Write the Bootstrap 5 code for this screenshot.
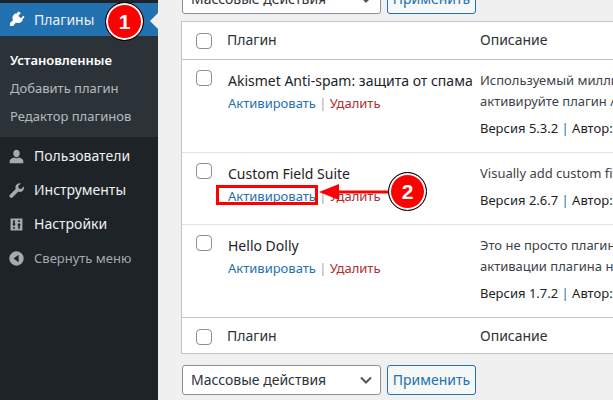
<!DOCTYPE html>
<html lang="ru">
<head>
    <meta charset="UTF-8">
    <meta name="viewport" content="width=device-width, initial-scale=1.0">
    <title>Плагины</title>
    <link href="https://cdn.jsdelivr.net/npm/bootstrap@5.3.1/dist/css/bootstrap.min.css" rel="stylesheet">
    <script src="https://cdn.jsdelivr.net/npm/bootstrap@5.3.1/dist/js/bootstrap.bundle.min.js"></script>
    <style>
        html, body { height: 400px; overflow: hidden; }
        body { background: #f0f0f1; color: #3c434a; font-family: "Noto Sans", sans-serif; font-size: 13px; line-height: 20px; position: relative; }
        a { text-decoration: none; }

        .wp-side { width: 158px; height: 400px; background: #1d2327; padding-top: 3px; flex: none; }
        .side-item { height: 34px; color: #f0f0f1; font-size: 14px; padding-left: 8px; gap: 9px; }
        .side-item svg { width: 17px; height: 17px; fill: #a7aaad; flex: none; }
        .side-item.active { background: #2271b1; color: #f0f0f1; height: 33px; position: relative; }
        .side-item.active svg { fill: #fff; }
        .side-item.active::after { content: ""; position: absolute; right: 0; top: 10px; border: 8px solid transparent; border-right-color: #f0f0f1; }
        .side-sub { background: #2c3338; padding: 10px 0 7px; margin-bottom: 1px; }
        .side-sub a { display: block; height: 28px; line-height: 28px; padding-left: 10px; color: rgba(240,246,252,.7); font-size: 13px; }
        .side-sub a.current { color: #fff; font-weight: 600; }
        .side-gap { height: 1px; }
        .side-item.muted { color: #a7aaad; font-size: 13px; }

        .wp-main { width: 455px; padding: 0 0 0 23px; margin-top: -16px; flex: none; }
        .bulk-row { gap: 6px; padding-left: 1px; }
        .bulk-select { width: 199px; height: 30px; border: 1px solid #8c8f94; border-radius: 3px; background: #fff; padding-left: 8px; font-size: 14px; color: #2c3338; flex: none; }
        .bulk-select svg { width: 12px; height: 8px; margin-right: 8px; }
        .bulk-btn { width: 89px; height: 30px; border: 1px solid #2271b1; border-radius: 3px; background: #f6f7f7; color: #2271b1; font-size: 14px; padding: 0; line-height: 28px; flex: none; }

        .plugin-box { width: 600px; border: 1px solid #c3c4c7; background: #fff; margin: 7px 0 11px; }
        .plugin-box table { table-layout: fixed; width: 600px; margin: 0; border-collapse: collapse; }
        .plugin-box td, .plugin-box th { padding: 0; vertical-align: top; font-weight: 400; white-space: nowrap; overflow: hidden; border: 0; }
        .col-check { width: 45px; }
        .col-name { width: 253px; }
        .head-row td { height: 37px; font-size: 14px; line-height: 36px; color: #2c3338; }
        .head-row.top td { border-bottom: 1px solid #c3c4c7; }
        .foot-row td { border-top: 1px solid #c3c4c7; height: 35px; line-height: 35px; font-size: 14px; color: #2c3338; }
        .plug-row td { border-top: 1px solid #e1e2e4; }
        .plug-row:first-of-type td { border-top: 0; }
        .fake-check { display: block; width: 16px; height: 16px; border: 1px solid #8c8f94; border-radius: 4px; background: #fff; margin: 10px 0 0 14px; }
        .head-row .fake-check, .foot-row .fake-check { margin-top: 11px; }
        .plug-name { font-size: 14px; color: #1d2327; padding-top: 10px; line-height: 21px; padding-left: 1px; }
        .plug-links { font-size: 13px; color: #a7aaad; margin-top: 2px; line-height: 20px; padding-left: 1px; }
        .link-blue { color: #2271b1; }
        .link-red { color: #b32d2e; }
        .plug-desc { padding-top: 10px; font-size: 13px; line-height: 21px; color: #3c434a; }
        .plug-ver { color: #1d2327; margin-top: 6px; font-size: 13px; line-height: 21px; }

        .step-dot { position: absolute; width: 39px; height: 39px; border-radius: 50%; background: #f00; color: #fff; font-family: "Liberation Sans", sans-serif; font-weight: 700; font-size: 21px; border: 1px solid #000; box-shadow: inset 0 0 0 2px #fff; }
        .step-one { left: 105px; top: 2px; }
        .step-two { left: 388px; top: 172px; }
        .red-frame { position: absolute; left: 216px; top: 185px; width: 102px; height: 20px; border: 3px solid #f00; }
        .red-arrow { position: absolute; left: 317px; top: 183px; width: 74px; height: 18px; }
    </style>
</head>
<body>
<div class="d-flex">
    <aside class="wp-side">
        <div class="side-item active d-flex align-items-center">
            <svg viewBox="0 0 20 20"><path d="M13.1 1.2l1.7 1.6-3 3 3.1 3.1 3-3 1.6 1.7-3 3 .9.9-1.8 1.8c-2 2-4.700 2.200-6.800.8L5.200 18.500 1.500 18.500 1.500 14.800 5.300 11.300C3.900 9.200 4.100 6.500 6.100 4.500l1.800-1.800.9.900 3-3z" transform="translate(1 0) scale(.95)"/></svg>
            <span>Плагины</span>
        </div>
        <div class="side-sub">
            <a href="#" class="current">Установленные</a>
            <a href="#">Добавить плагин</a>
            <a href="#">Редактор плагинов</a>
        </div>
        <div class="side-gap"></div>
        <div class="side-item d-flex align-items-center">
            <svg viewBox="0 0 20 20"><path d="M10 2c2.300 0 3.800 1.900 3.800 4.200S12.300 11 10 11 6.200 8.500 6.200 6.200 7.700 2 10 2zM2 18v-3c0-1.700 3-3.200 5-3.800 1.800 1 4.200 1 6 0 2 .6 5 2.100 5 3.800v3H2z"/></svg>
            <span>Пользователи</span>
        </div>
        <div class="side-item d-flex align-items-center">
            <svg viewBox="0 0 20 20"><path d="M18.600 5.300c.5 1.700.1 3.600-1.200 4.900-1.400 1.400-3.400 1.800-5.200 1.100L5.500 18a2.200 2.200 0 0 1-3.200-3.100l6.800-6.800c-.7-1.800-.3-3.800 1.100-5.200C11.500 1.600 13.400 1.200 15.100 1.700L12 4.800l.6 2.700 2.700.6 3.300-2.800z"/></svg>
            <span>Инструменты</span>
        </div>
        <div class="side-item d-flex align-items-center">
            <svg viewBox="0 0 20 20"><path fill-rule="evenodd" d="M3 3h14v14H3V3zm3 2v4H4.800l2.200 3 2.200-3H8V5H6zm6 10v-4h-1.200L13 8l2.200 3H14v4h-2zM6 13v2h2v-2H6zm6-8v2h2V5h-2z"/></svg>
            <span>Настройки</span>
        </div>
        <div class="side-item muted d-flex align-items-center">
            <svg viewBox="0 0 20 20"><path fill-rule="evenodd" d="M10 1.500a8.500 8.500 0 1 1 0 17 8.500 8.500 0 0 1 0-17zM12.500 5.500L6.500 10l6 4.500v-9z"/></svg>
            <span>Свернуть меню</span>
        </div>
    </aside>

    <main class="wp-main">
        <div class="bulk-row d-flex">
            <div class="bulk-select d-flex align-items-center justify-content-between">
                <span>Массовые действия</span>
                <svg viewBox="0 0 12 8"><path d="M1 1.500l5 5 5-5" fill="none" stroke="#50575e" stroke-width="2"/></svg>
            </div>
            <button type="button" class="btn bulk-btn">Применить</button>
        </div>

        <div class="plugin-box">
            <table class="table">
                <colgroup><col class="col-check"><col class="col-name"><col></colgroup>
                <tbody>
                <tr class="head-row top">
                    <td><span class="fake-check"></span></td>
                    <td>Плагин</td>
                    <td>Описание</td>
                </tr>
                <tr class="plug-row">
                    <td><span class="fake-check"></span></td>
                    <td>
                        <div class="plug-name">Akismet Anti-spam: защита от спама</div>
                        <div class="plug-links"><a href="#" class="link-blue">Активировать</a> | <a href="#" class="link-red">Удалить</a></div>
                    </td>
                    <td>
                        <div class="plug-desc">Используемый миллионами, Akismet, возможно, лучший способ<br>активируйте плагин Akismet, затем перейдите на страницу</div>
                        <div class="plug-ver">Версия 5.3.2 <span class="link-blue">|</span> Автор: <a href="#" class="link-blue">Automattic</a></div>
                        <div style="height:13px"></div>
                    </td>
                </tr>
                <tr class="plug-row">
                    <td><span class="fake-check"></span></td>
                    <td>
                        <div class="plug-name">Custom Field Suite</div>
                        <div class="plug-links"><a href="#" class="link-blue">Активировать</a> | <a href="#" class="link-red">Удалить</a></div>
                    </td>
                    <td>
                        <div class="plug-desc">Visually add custom fields to your WordPress edit pages.</div>
                        <div class="plug-ver">Версия 2.6.7 <span class="link-blue">|</span> Автор: <a href="#" class="link-blue">Matt Gibbs</a></div>
                        <div style="height:13px"></div>
                    </td>
                </tr>
                <tr class="plug-row">
                    <td><span class="fake-check"></span></td>
                    <td>
                        <div class="plug-name">Hello Dolly</div>
                        <div class="plug-links"><a href="#" class="link-blue">Активировать</a> | <a href="#" class="link-red">Удалить</a></div>
                    </td>
                    <td>
                        <div class="plug-desc">Это не просто плагин, он символизирует надежду и энтузиазм<br>активации плагина на каждой странице панели управления</div>
                        <div class="plug-ver">Версия 1.7.2 <span class="link-blue">|</span> Автор: <a href="#" class="link-blue">Matt Mullenweg</a></div>
                        <div style="height:13px"></div>
                    </td>
                </tr>
                <tr class="foot-row">
                    <td><span class="fake-check"></span></td>
                    <td>Плагин</td>
                    <td>Описание</td>
                </tr>
                </tbody>
            </table>
        </div>

        <div class="bulk-row d-flex">
            <div class="bulk-select d-flex align-items-center justify-content-between">
                <span>Массовые действия</span>
                <svg viewBox="0 0 12 8"><path d="M1 1.500l5 5 5-5" fill="none" stroke="#50575e" stroke-width="2"/></svg>
            </div>
            <button type="button" class="btn bulk-btn">Применить</button>
        </div>
    </main>
</div>

<div class="step-dot step-one d-flex align-items-center justify-content-center">1</div>
<div class="red-frame"></div>
<svg class="red-arrow" viewBox="0 0 74 18"><path d="M2 9L22 1v6.500h52v3H22V17z" fill="#f00"/></svg>
<div class="step-dot step-two d-flex align-items-center justify-content-center">2</div>
</body>
</html>
